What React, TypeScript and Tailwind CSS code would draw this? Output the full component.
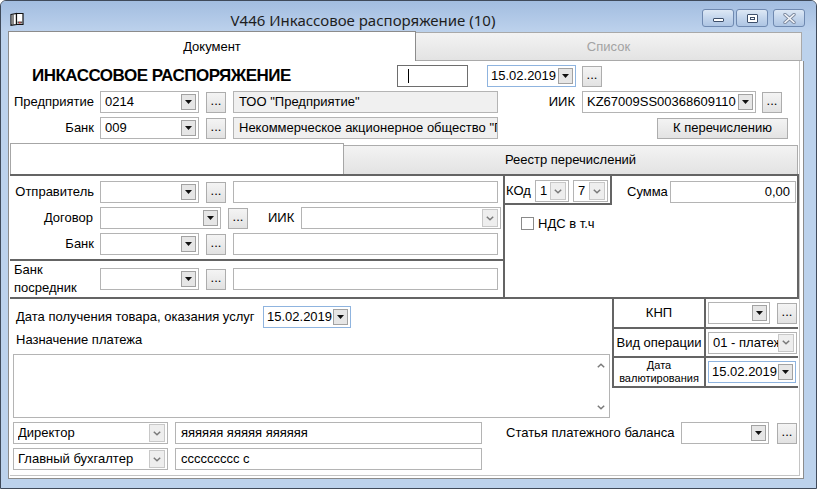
import React from 'react';

function Tri() {
  return (
    <svg width="7" height="4" viewBox="0 0 7 4">
      <path d="M0 0H7L3.5 4Z" fill="#111" />
    </svg>
  );
}

function Chev({ up = false }: { up?: boolean }) {
  return (
    <svg width="8" height="5" viewBox="0 0 8 5">
      <path
        d={up ? 'M0.8 4.3L4 1.2L7.2 4.3' : 'M0.8 0.7L4 3.8L7.2 0.7'}
        stroke="#7a7a7a"
        strokeWidth="1.5"
        fill="none"
      />
    </svg>
  );
}

type ComboProps = { w: string; value?: string; chev?: boolean; blue?: boolean };

function Combo({ w, value = '', chev = false, blue = false }: ComboProps) {
  return (
    <div
      className={`${w} h-[22px] shrink-0 flex items-center bg-white border pr-[2px] ${
        blue ? 'border-[#8fb4df] pl-[3px]' : 'border-[#b4b4b4] pl-[4px]'
      }`}
    >
      <span className="flex-1 min-w-0 overflow-hidden whitespace-nowrap">{value}</span>
      {chev ? (
        <span className="w-[16px] h-[18px] shrink-0 flex items-center justify-center border border-[#c8c8c8] bg-[#eeeeee]">
          <Chev />
        </span>
      ) : (
        <span className="w-[15px] h-[16px] shrink-0 flex items-center justify-center border border-[#a2a2a2] bg-[#e6e6e6]">
          <Tri />
        </span>
      )}
    </div>
  );
}

function Dots() {
  return (
    <div className="w-[20px] h-[21px] shrink-0 flex items-end justify-center pb-[5px] border border-[#adadad] bg-gradient-to-b from-[#f4f4f4] to-[#e2e2e2] text-[13px] leading-none">
      ...
    </div>
  );
}

function Field({ w, value = '', gray = false, right = false }: { w: string; value?: string; gray?: boolean; right?: boolean }) {
  return (
    <div
      className={`${w} h-[22px] shrink-0 flex items-center px-[5px] border border-[#b4b4b4] overflow-hidden whitespace-nowrap ${
        gray ? 'bg-[#f0f0f0]' : 'bg-white'
      } ${right ? 'justify-end' : ''}`}
    >
      {value}
    </div>
  );
}

function BookIcon() {
  return (
    <svg width="14" height="14" viewBox="0 0 14 14">
      <path d="M1 2.5L6.5 1.5V12.5L1 13.2Z" fill="#fff" stroke="#111" strokeWidth="1.2" />
      <path d="M6.5 1.5H13V12.5H6.5Z" fill="#fff" stroke="#111" strokeWidth="1.2" />
      <path d="M3 2.5V12" stroke="#111" strokeWidth="1" />
      <rect x="7.5" y="9.5" width="5" height="2" fill="#555" />
      <rect x="9" y="10" width="1.5" height="1.3" fill="#d33" />
    </svg>
  );
}

function CaptionButton({ kind }: { kind: 'min' | 'max' | 'close' }) {
  return (
    <div className="w-[32px] h-[18px] rounded-[3px] border border-[#6f89b0] bg-gradient-to-b from-[#dde8f5] via-[#c3d5ec] to-[#aec5e3] flex items-center justify-center">
      {kind === 'min' && <div className="w-[11px] h-[4px] mt-[4px] bg-white border border-[#3d4f6b] rounded-[1px]" />}
      {kind === 'max' && (
        <div className="w-[11px] h-[9px] border border-[#3d4f6b] bg-white rounded-[1px] flex items-center justify-center">
          <div className="w-[5px] h-[3px] border border-[#3d4f6b]" />
        </div>
      )}
      {kind === 'close' && (
        <svg width="13" height="11" viewBox="0 0 13 11">
          <path d="M2 1.5L11 9.5M11 1.5L2 9.5" stroke="#7d8aa0" strokeWidth="3.4" strokeLinecap="round" />
          <path d="M2 1.5L11 9.5M11 1.5L2 9.5" stroke="#f4f6fa" strokeWidth="1.6" strokeLinecap="round" />
        </svg>
      )}
    </div>
  );
}

export default function App() {
  return (
    <div className="w-[817px] h-[489px] flex flex-col overflow-hidden bg-[#bcd2ec] border border-[#3f4a5a] rounded-t-[6px] font-['Liberation_Sans',Arial,sans-serif] text-[13px] text-black">
      {/* title bar */}
      <div className="h-[30px] shrink-0 flex items-start bg-gradient-to-b from-[#a2bde0] to-[#bcd1ec]">
        <div className="ml-[9px] mt-[11px]">
          <BookIcon />
        </div>
        <div className="flex-1 text-center pt-[9px] text-[15px] leading-[20px] text-[#1e1e1e] font-['Noto_Sans',sans-serif]">
          V446 Инкассовое распоряжение (10)
        </div>
        <div className="flex mt-[8px] mr-[11px] gap-[2px]">
          <CaptionButton kind="min" />
          <CaptionButton kind="max" />
          <div className="w-[1px]" />
          <CaptionButton kind="close" />
        </div>
      </div>

      <div className="ml-[7px] w-[796px] flex flex-col">
        {/* main tabs */}
        <div className="h-[30px] flex items-start">
          <div className="w-[408px] h-[30px] bg-white border-t border-l border-r border-[#8c8c8c] flex items-center justify-center">
            Документ
          </div>
          <div className="w-[386px] h-[29px] mt-[1px] border border-[#a9a9a9] border-l-0 bg-gradient-to-b from-[#f3f3f3] to-[#e3e3e3] flex items-center justify-center text-[#a3a3a3]">
            Список
          </div>
        </div>

        {/* page */}
        <div className="h-[418px] bg-white border-l border-r border-b border-[#8c8c8c] pl-[1px] pr-[3px] pb-[2px]">
          <div className="h-full w-[790px] border-r border-b border-[#c4c4c4] flex flex-col">
            {/* header rows */}
            <div className="mt-[4px] h-[22px] flex items-center">
              <div className="w-[387px] pl-[22px] text-[17px] font-bold tracking-[-0.5px]">ИНКАССОВОЕ РАСПОРЯЖЕНИЕ</div>
              <div className="w-[71px] h-[22px] border border-[#6e6e6e] flex items-center pl-[10px]">
                <div className="w-[1px] h-[14px] bg-black" />
              </div>
              <div className="ml-[19px]">
                <Combo w="w-[89px]" value="15.02.2019" blue />
              </div>
              <div className="ml-[6px]">
                <Dots />
              </div>
            </div>

            <div className="mt-[4px] h-[22px] flex items-center">
              <div className="w-[84px] text-right">Предприятие</div>
              <div className="ml-[6px]">
                <Combo w="w-[99px]" value="0214" />
              </div>
              <div className="ml-[7px]">
                <Dots />
              </div>
              <div className="ml-[7px]">
                <Field w="w-[265px]" value={'ТОО "Предприятие"'} gray />
              </div>
              <div className="w-[77px] text-right">ИИК</div>
              <div className="ml-[7px]">
                <Combo w="w-[174px]" value="KZ67009SS00368609110" />
              </div>
              <div className="ml-[6px]">
                <Dots />
              </div>
            </div>

            <div className="mt-[4px] h-[22px] flex items-center">
              <div className="w-[84px] text-right">Банк</div>
              <div className="ml-[6px]">
                <Combo w="w-[99px]" value="009" />
              </div>
              <div className="ml-[7px]">
                <Dots />
              </div>
              <div className="ml-[7px]">
                <Field w="w-[265px]" value={'Некоммерческое акционерное общество "Государственная корпорация"'} gray />
              </div>
              <div className="ml-[159px] w-[131px] h-[21px] border border-[#adadad] bg-gradient-to-b from-[#f3f3f3] to-[#e3e3e3] flex items-center justify-center">
                К перечислению
              </div>
            </div>

            {/* inner tabs */}
            <div className="mt-[4px] h-[31px] flex items-start">
              <div className="w-[334px] h-[31px] bg-white border-t border-l border-r border-[#a6a6a6]" />
              <div className="w-[454px] h-[29px] mt-[2px] border border-b-0 border-l-0 border-[#acacac] bg-gradient-to-b from-[#f3f3f3] to-[#e3e3e3] flex items-center justify-center">
                Реестр перечислений
              </div>
            </div>

            {/* section with senders */}
            <div className="h-[125px] flex border-t-2 border-b-2 border-r-2 border-[#646464]">
              <div className="w-[493px] flex flex-col">
                <div className="h-[85px] border-b-2 border-[#646464] flex flex-col pt-[5px] gap-[4px]">
                  <div className="flex items-center">
                    <div className="w-[84px] text-right">Отправитель</div>
                    <div className="ml-[6px]">
                      <Combo w="w-[99px]" />
                    </div>
                    <div className="ml-[7px]">
                      <Dots />
                    </div>
                    <div className="ml-[7px]">
                      <Field w="w-[265px]" />
                    </div>
                  </div>
                  <div className="flex items-center">
                    <div className="w-[83px] text-right">Договор</div>
                    <div className="ml-[7px]">
                      <Combo w="w-[121px]" />
                    </div>
                    <div className="ml-[7px]">
                      <Dots />
                    </div>
                    <div className="ml-[20px]">ИИК</div>
                    <div className="ml-[7px]">
                      <Combo w="w-[200px]" chev />
                    </div>
                  </div>
                  <div className="flex items-center">
                    <div className="w-[84px] text-right">Банк</div>
                    <div className="ml-[6px]">
                      <Combo w="w-[99px]" />
                    </div>
                    <div className="ml-[7px]">
                      <Dots />
                    </div>
                    <div className="ml-[7px]">
                      <Field w="w-[265px]" />
                    </div>
                  </div>
                </div>
                <div className="flex-1 flex items-center">
                  <div className="w-[84px] pl-[4px] leading-[18px]">
                    Банк
                    <br />
                    посредник
                  </div>
                  <div className="ml-[6px]">
                    <Combo w="w-[99px]" />
                  </div>
                  <div className="ml-[7px]">
                    <Dots />
                  </div>
                  <div className="ml-[7px]">
                    <Field w="w-[265px]" />
                  </div>
                </div>
              </div>

              <div className="flex-1 border-l-2 border-[#646464] flex flex-col">
                <div className="flex items-start">
                  <div className="w-[107px] h-[29px] border-r-2 border-b-2 border-[#646464] flex items-center pt-[3px]">
                    <div className="w-[30px] pl-[1px]">КОд</div>
                    <Combo w="w-[34px]" value="1" chev />
                    <div className="ml-[4px]">
                      <Combo w="w-[35px]" value="7" chev />
                    </div>
                  </div>
                  <div className="ml-[15px] mt-[5px] h-[22px] flex items-center">
                    <div className="w-[43px]">Сумма</div>
                    <Field w="w-[126px]" value="0,00" right />
                  </div>
                </div>
                <div className="mt-[9px] pl-[16px] flex items-center">
                  <div className="w-[13px] h-[13px] border border-[#8a8a8a] bg-white" />
                  <div className="ml-[4px]">НДС в т.ч</div>
                </div>
              </div>
            </div>

            {/* lower section */}
            <div className="flex items-start">
              <div className="w-[602px] flex flex-col">
                <div className="mt-[7px] h-[22px] flex items-center pl-[6px]">
                  <div className="w-[247px]">Дата получения товара, оказания услуг</div>
                  <Combo w="w-[88px]" value="15.02.2019" blue />
                </div>
                <div className="mt-[4px] h-[16px] leading-[16px] pl-[6px]">Назначение платежа</div>
                <div className="mt-[6px] ml-[3px] w-[597px] h-[64px] border border-[#b4b4b4] flex justify-end">
                  <div className="w-[17px] flex flex-col items-center justify-between pt-[8px] pb-[7px]">
                    <Chev up />
                    <Chev />
                  </div>
                </div>
              </div>

              <div className="w-[186px] border-l-2 border-b-2 border-[#646464] flex flex-col">
                <div className="h-[30px] flex border-b-2 border-[#646464]">
                  <div className="w-[92px] border-r-2 border-[#646464] flex items-center justify-center">КНП</div>
                  <div className="flex items-center pl-[2px]">
                    <Combo w="w-[62px]" />
                    <div className="ml-[7px]">
                      <Dots />
                    </div>
                  </div>
                </div>
                <div className="h-[29px] flex border-b-2 border-[#646464]">
                  <div className="w-[92px] border-r-2 border-[#646464] flex items-center justify-center">Вид операции</div>
                  <div className="flex items-center pl-[2px]">
                    <Combo w="w-[89px]" value="01 - платежное поручение" chev />
                  </div>
                </div>
                <div className="h-[28px] flex">
                  <div className="w-[92px] border-r-2 border-[#646464] flex flex-col items-center justify-center text-[11px] leading-[13px]">
                    <span>Дата</span>
                    <span>валютирования</span>
                  </div>
                  <div className="flex items-center pl-[2px]">
                    <Combo w="w-[88px]" value="15.02.2019" blue />
                  </div>
                </div>
              </div>
            </div>

            {/* signatures */}
            <div className="mt-[4px] flex items-center pl-[3px]">
              <Combo w="w-[155px]" value="Директор" chev />
              <div className="ml-[7px]">
                <Field w="w-[307px]" value="яяяяяя яяяяя яяяяяя" />
              </div>
              <div className="ml-[24px] w-[175px]">Статья платежного баланса</div>
              <Combo w="w-[88px]" />
              <div className="ml-[8px]">
                <Dots />
              </div>
            </div>
            <div className="mt-[4px] flex items-center pl-[3px]">
              <Combo w="w-[155px]" value="Главный бухгалтер" chev />
              <div className="ml-[7px]">
                <Field w="w-[307px]" value="ссссссссс с" />
              </div>
            </div>
          </div>
        </div>
      </div>
    </div>
  );
}
